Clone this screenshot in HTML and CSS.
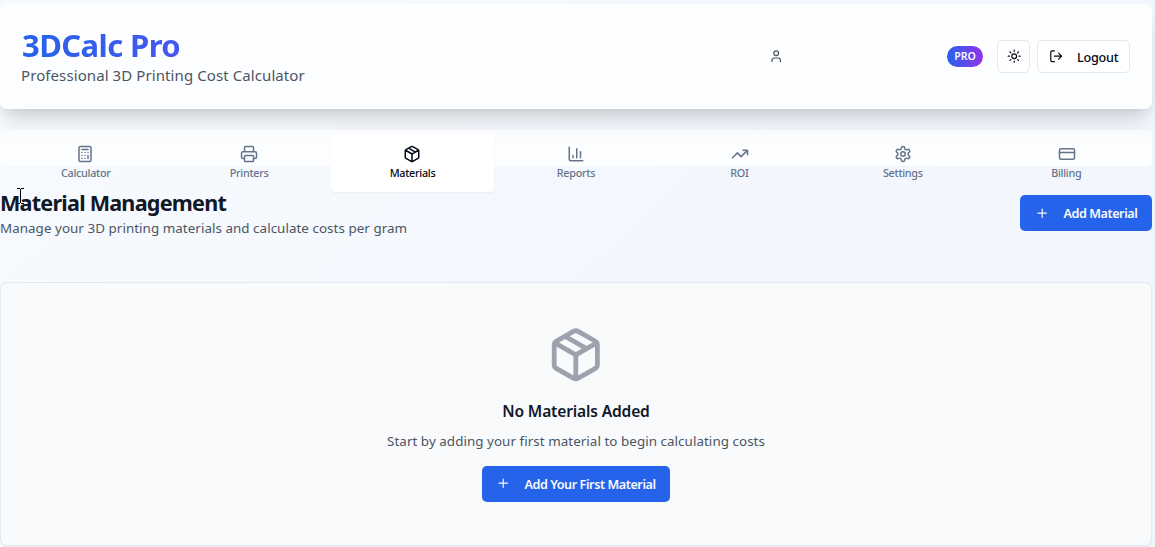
FILE: index.html
```html
<!DOCTYPE html>
<html lang="en">
<head>
<meta charset="utf-8">
<title>3DCalc Pro</title>
<link rel="stylesheet" href="styles.css">
</head>
<body>
<div class="app">
  <header class="header">
    <div class="brand">
      <h1 class="brand-name"><span class="brand-text">3DCalc Pro</span></h1>
      <p class="brand-tag"><span>Professional 3D Printing Cost Calculator</span></p>
    </div>
    <div class="account">
      <svg class="icon icon-sm user" viewBox="0 0 24 24"><path d="M19 21v-2a4 4 0 0 0-4-4H9a4 4 0 0 0-4 4v2"/><circle cx="12" cy="7" r="4"/></svg>
      <span class="badge">PRO</span>
      <button class="btn-outline theme" aria-label="Toggle theme"><svg class="icon icon-sm" viewBox="0 0 24 24"><circle cx="12" cy="12" r="4"/><path d="M12 2v2M12 20v2M4.93 4.93l1.41 1.41M17.66 17.66l1.41 1.41M2 12h2M20 12h2M6.34 17.66l-1.41 1.41M19.07 4.93l-1.41 1.41"/></svg></button>
      <button class="btn-outline logout"><svg class="icon icon-sm" viewBox="0 0 24 24"><path d="M9 21H5a2 2 0 0 1-2-2V5a2 2 0 0 1 2-2h4M16 17l5-5-5-5M21 12H9"/></svg><span>Logout</span></button>
    </div>
  </header>

  <nav class="tabs">
    <a class="tab"><svg class="icon calc" viewBox="0 0 24 24"><rect x="4" y="2" width="16" height="20" rx="2"/><path d="M8 6h8M16 14v4M16 10h.01M12 10h.01M8 10h.01M12 14h.01M8 14h.01M12 18h.01M8 18h.01"/></svg><span>Calculator</span></a>
    <a class="tab"><svg class="icon" viewBox="0 0 24 24"><path d="M6 18H4a2 2 0 0 1-2-2v-5a2 2 0 0 1 2-2h16a2 2 0 0 1 2 2v5a2 2 0 0 1-2 2h-2M6 9V3a1 1 0 0 1 1-1h10a1 1 0 0 1 1 1v6"/><rect x="6" y="14" width="12" height="8" rx="1"/></svg><span>Printers</span></a>
    <a class="tab active"><svg class="icon box" viewBox="0 0 24 24"><path d="M11 21.73a2 2 0 0 0 2 0l7-4A2 2 0 0 0 21 16V8a2 2 0 0 0-1-1.73l-7-4a2 2 0 0 0-2 0l-7 4A2 2 0 0 0 3 8v8a2 2 0 0 0 1 1.73zM12 22V12M3.29 7L12 12l8.71-5M7.5 4.27l9 5.15"/></svg><span>Materials</span></a>
    <a class="tab"><svg class="icon" viewBox="0 0 24 24"><path d="M3 3v16a2 2 0 0 0 2 2h16M18 17V9M13 17V5M8 17v-3"/></svg><span>Reports</span></a>
    <a class="tab"><svg class="icon roi" viewBox="0 0 24 24"><path d="M22 7l-8.5 8.5-5-5L2 17M16 7h6v6"/></svg><span>ROI</span></a>
    <a class="tab"><svg class="icon" viewBox="0 0 24 24"><path d="M12.22 2h-.44a2 2 0 0 0-2 2v.18a2 2 0 0 1-1 1.73l-.43.25a2 2 0 0 1-2 0l-.15-.08a2 2 0 0 0-2.73.73l-.22.38a2 2 0 0 0 .73 2.73l.15.1a2 2 0 0 1 1 1.72v.51a2 2 0 0 1-1 1.74l-.15.09a2 2 0 0 0-.73 2.73l.22.38a2 2 0 0 0 2.73.73l.15-.08a2 2 0 0 1 2 0l.43.25a2 2 0 0 1 1 1.73V20a2 2 0 0 0 2 2h.44a2 2 0 0 0 2-2v-.18a2 2 0 0 1 1-1.73l.43-.25a2 2 0 0 1 2 0l.15.08a2 2 0 0 0 2.73-.73l.22-.39a2 2 0 0 0-.73-2.73l-.15-.08a2 2 0 0 1-1-1.74v-.5a2 2 0 0 1 1-1.74l.15-.09a2 2 0 0 0 .73-2.73l-.22-.38a2 2 0 0 0-2.73-.73l-.15.08a2 2 0 0 1-2 0l-.43-.25a2 2 0 0 1-1-1.73V4a2 2 0 0 0-2-2z"/><circle cx="12" cy="12" r="3"/></svg><span>Settings</span></a>
    <a class="tab"><svg class="icon card" viewBox="0 0 24 24"><rect x="2" y="5" width="20" height="14" rx="2"/><path d="M2 10h20"/></svg><span>Billing</span></a>
  </nav>

  <main>
    <div class="page-head">
      <div>
        <h2 class="page-title"><span>Material Management</span></h2>
        <p class="page-sub"><span>Manage your 3D printing materials and calculate costs per gram</span></p>
      </div>
      <button class="btn-primary add"><svg class="icon icon-sm" viewBox="0 0 24 24"><path d="M5 12h14M12 5v14"/></svg><span>Add Material</span></button>
    </div>
    <section class="empty">
      <svg class="icon icon-lg" viewBox="0 0 24 24"><path d="M11 21.73a2 2 0 0 0 2 0l7-4A2 2 0 0 0 21 16V8a2 2 0 0 0-1-1.73l-7-4a2 2 0 0 0-2 0l-7 4A2 2 0 0 0 3 8v8a2 2 0 0 0 1 1.73zM12 22V12M3.29 7L12 12l8.71-5M7.5 4.27l9 5.15"/></svg>
      <h3 class="empty-title"><span>No Materials Added</span></h3>
      <p class="empty-text"><span>Start by adding your first material to begin calculating costs</span></p>
      <button class="btn-primary first"><svg class="icon icon-sm" viewBox="0 0 24 24"><path d="M5 12h14M12 5v14"/></svg><span>Add Your First Material</span></button>
    </section>
  </main>
  <svg class="cursor" viewBox="0 0 7 16"><path d="M0 .5h3M4 .5h3M3.5 1v14M0 15.5h3M4 15.5h3"/></svg>
</div>
</body>
</html>
```
FILE: styles.css
```css
* { box-sizing: border-box; }
body {
  margin: 0;
  height: 547px;
  overflow: hidden;
  font-family: "Noto Sans", "Open Sans", sans-serif;
  color: #111827;
  background: linear-gradient(135deg, #f7fafd 0%, #f4f7fd 50%, #f2f6fc 100%);
}
h1, h2, h3, p { margin: 0; white-space: nowrap; }
button { font: inherit; margin: 0; }
.app { position: relative; width: 1152px; padding-top: 4px; }
.icon {
  width: 18px;
  height: 18px;
  flex: none;
  fill: none;
  stroke: currentColor;
  stroke-width: 2;
  stroke-linecap: round;
  stroke-linejoin: round;
}
.icon-sm { width: 14.4px; height: 14.4px; }
.icon-lg { width: 57.6px; height: 57.6px; color: #9ca3af; }

.header {
  display: flex;
  justify-content: space-between;
  height: 105px;
  padding: 21px 22px 0 21px;
  border-radius: 7px;
  background: #fdfeff;
  box-shadow: 0 18px 23px -5px rgba(0, 0, 0, .1), 0 7px 14px -5px rgba(0, 0, 0, .13);
}
.brand-name { padding-left: 1px; font-size: 31px; line-height: 40px; font-weight: 700; letter-spacing: -.6px; }
.brand-text {
  color: transparent;
  background: linear-gradient(90deg, #2563eb, #4658ee);
  background-clip: text;
  -webkit-background-clip: text;
}
.brand-tag { font-size: 15px; line-height: 20px; letter-spacing: .09px; color: #4b5563; }
.account { display: flex; align-items: center; height: 63px; }
.user { color: #4b5563; margin-right: 164px; }
.badge {
  width: 36px;
  height: 21px;
  margin-right: 14px;
  border-radius: 11px;
  background: linear-gradient(90deg, #2563eb, #9333ea);
  color: #f8fafc;
  font-size: 10.6px;
  line-height: 20px;
  font-weight: 600;
  letter-spacing: -.1px;
  text-align: center;
}
.btn-outline {
  display: flex;
  align-items: center;
  justify-content: center;
  height: 33px;
  padding: 0;
  border: 1px solid #e2e8f0;
  border-radius: 5px;
  background: #fff;
  color: #020817;
  font-size: 12.6px;
  font-weight: 500;
  letter-spacing: -.25px;
}
.theme { width: 33px; margin-right: 7px; padding-left: 1px; }
.logout { width: 93px; gap: 14px; }
.logout span { padding-top: 1px; }

.tabs {
  display: grid;
  grid-template-columns: repeat(7, 1fr);
  height: 36px;
  margin-top: 21px;
  padding: 4px;
  border-radius: 5px;
  background: linear-gradient(#fafbfd, #fdfeff 50%);
  position: relative;
}
.tab {
  display: flex;
  flex-direction: column;
  align-items: center;
  height: 58px;
  padding-top: 11px;
  gap: 3px;
  border-radius: 4px;
  color: #64748b;
  font-size: 10.8px;
  line-height: 14px;
  font-weight: 500;
  letter-spacing: -.28px;
}
.calc, .box { margin-right: 1.6px; }
.roi, .card { margin-left: 1.6px; }
.active { background: #fff; color: #020817; box-shadow: 0 1px 2px rgba(0, 0, 0, .05); }

.page-head {
  display: flex;
  justify-content: space-between;
  height: 116px;
  padding-top: 23px;
}
.page-title { font-size: 21.6px; line-height: 28px; font-weight: 700; letter-spacing: -.78px; }
.page-sub { font-size: 13.4px; line-height: 20px; margin-top: 1px; letter-spacing: .045px; color: #4b5563; }
.btn-primary {
  display: flex;
  align-items: center;
  height: 36px;
  padding: 0 14px 0 15px;
  gap: 14px;
  border: 0;
  border-radius: 5px;
  background: #2563eb;
  color: #f8fafc;
  font-size: 12.6px;
  font-weight: 600;
  letter-spacing: -.42px;
  white-space: nowrap;
}
.add { width: 132px; margin-top: 6px; }
.first { width: 188px; padding-left: 14px; }
.first span { padding-top: 1px; }

.empty {
  display: flex;
  flex-direction: column;
  align-items: center;
  height: 264px;
  padding-top: 43px;
  border: 1px solid #e2e8f0;
  border-radius: 7px;
  background: #f9fafc;
  box-shadow: 0 1px 2px rgba(0, 0, 0, .05);
}
.empty .icon-lg { margin-right: 1px; }
.empty-title { margin-top: 14px; font-size: 15.6px; line-height: 26px; font-weight: 600; letter-spacing: -.17px; }
.empty-text { margin: 6px 0 14px; font-size: 13.4px; line-height: 22px; letter-spacing: .05px; color: #4b5563; }

.cursor {
  position: absolute;
  left: 17px;
  top: 188px;
  width: 7px;
  height: 16px;
  fill: none;
  stroke: #000;
  stroke-width: 1;
}
```
